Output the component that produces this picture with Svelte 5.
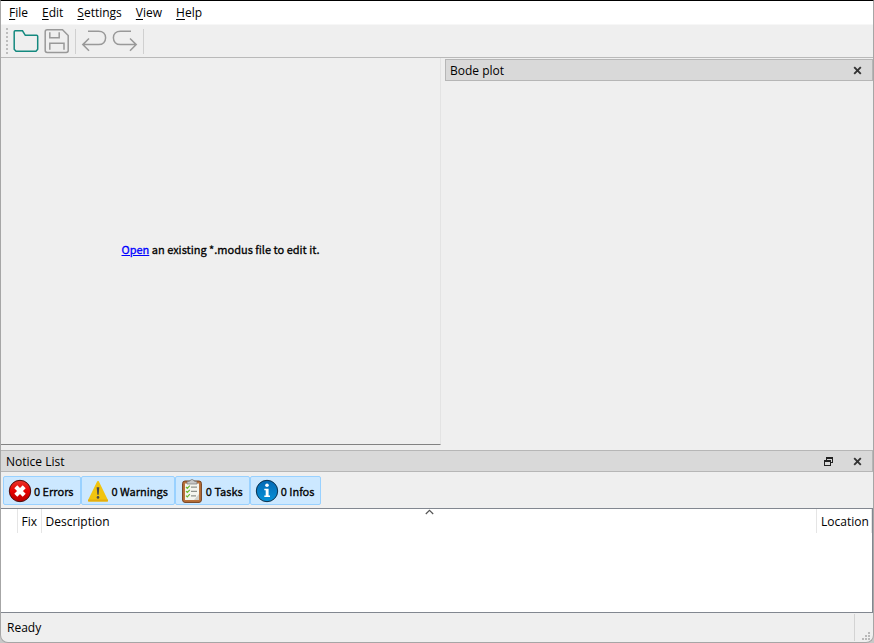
<script>
  const menus = ['File', 'Edit', 'Settings', 'View', 'Help'];
  const filters = [
    { kind: 'error', label: '0 Errors' },
    { kind: 'warning', label: '0 Warnings' },
    { kind: 'task', label: '0 Tasks' },
    { kind: 'info', label: '0 Infos' }
  ];
  let active = $state({ error: true, warning: true, task: true, info: true });
</script>

{#snippet closeIcon()}
  <svg width="9" height="9" viewBox="0 0 9 9"><path d="M1.2 1.2 7.8 7.8M7.8 1.2 1.2 7.8" stroke="#333" stroke-width="1.9" /></svg>
{/snippet}

<div class="window">
  <nav class="menubar">
    {#each menus as name}
      <button><u>{name[0]}</u>{name.slice(1)}</button>
    {/each}
  </nav>

  <div class="toolbar">
    <span class="grip"></span>
    <button aria-label="Open">
      <svg width="26" height="26" viewBox="0 0 26 26" fill="none" stroke="#14897f" stroke-width="1.5">
        <path d="M1.2 3.8Q1.2 2.8 2.2 2.8H9.5L12.3 7.3H23.6Q24.7 7.3 24.7 8.3V21.3L23 23.2H3L1.2 21.3Z" />
      </svg>
    </button>
    <button aria-label="Save">
      <svg width="26" height="26" viewBox="0 0 26 26" fill="none" stroke="#999" stroke-width="1.5">
        <path d="M3.2 1.8H18.5L24.2 7.5V22.5Q24.2 24.4 22.2 24.4H3.2Q1.2 24.4 1.2 22.5V3.8Q1.2 1.8 3.2 1.8ZM5.8 4.2V9.8H15.2V4.2M5.8 21.8V15.3H20V21.8" />
      </svg>
    </button>
    <span class="sep"></span>
    <button aria-label="Undo">
      <svg width="26" height="26" viewBox="0 0 26 26" fill="none" stroke="#999" stroke-width="1.5">
        <path d="M7 3.2H17.5C22 3.2 24.6 6 24.6 9.8S22 16.6 17.5 16.6H2M8 10.5 1.8 16.6 8 22.8" />
      </svg>
    </button>
    <button aria-label="Redo">
      <svg width="26" height="26" viewBox="0 0 26 26" fill="none" stroke="#999" stroke-width="1.5">
        <path d="M19 3.2H8.5C4 3.2 1.4 6 1.4 9.8S4 16.6 8.5 16.6H24M18 10.5 24.2 16.6 18 22.8" />
      </svg>
    </button>
    <span class="sep"></span>
  </div>

  <main>
    <section class="editor">
      <p><a href="#open">Open</a> an existing *.modus file to edit it.</p>
    </section>
    <section class="plot">
      <header class="dock">
        <h2>Bode plot</h2>
        <button aria-label="Close Bode plot">{@render closeIcon()}</button>
      </header>
    </section>
  </main>

  <section class="notices">
    <header class="dock">
      <h2>Notice List</h2>
      <button aria-label="Float Notice List">
        <svg width="9" height="9" viewBox="0 0 9 9" fill="none" stroke="#222" shape-rendering="crispEdges">
          <path d="M2.5 3V.5H8.5V5.5H7M2 1.5H9M.5 3.5H6.5V8.5H.5ZM0 4.5H7" />
        </svg>
      </button>
      <button aria-label="Close Notice List">{@render closeIcon()}</button>
    </header>

    <div class="filters">
      {#each filters as { kind, label }}
        <button class={kind} aria-pressed={active[kind]} onclick={() => (active[kind] = !active[kind])}>
          <svg width="24" height="24" viewBox="0 0 24 24">
            {#if kind === 'error'}
              <defs><linearGradient id="red" x2="0" y2="1"><stop stop-color="#e8352c" /><stop offset=".5" stop-color="#e60000" /><stop offset="1" stop-color="#b90000" /></linearGradient></defs>
              <circle cx="12" cy="12" r="10.7" fill="url(#red)" stroke="#4a0c0c" />
              <path d="M7.8 7.8 16.2 16.2M16.2 7.8 7.8 16.2" stroke="#fff" stroke-width="4.2" />
            {:else if kind === 'warning'}
              <path d="M12 3 21 21.5H3Z" fill="#f1c40f" stroke="#f1c40f" stroke-width="2" stroke-linejoin="round" />
              <path d="M2.3 20.5H21.7L22 22Q21.8 22.6 21 22.6H3Q2.2 22.6 2 22Z" fill="#e5ad0c" />
              <path d="M10.7 8.3H13.3L12.7 15.8H11.3Z" fill="#4b4a48" />
              <circle cx="12" cy="18.4" r="1.3" fill="#4b4a48" />
            {:else if kind === 'task'}
              <rect x="2.6" y="2" width="18.8" height="21.4" rx="2.4" fill="#b8703a" stroke="#71401e" />
              <rect x="5" y="4.5" width="14" height="16.5" fill="#f4f4ee" />
              <path d="M19 15V21H14Z" fill="#d1d0ca" />
              <path d="M7 5V3.4Q7 2.8 8 2.6L10 2Q10.3.5 12 .5T14 2L16 2.6Q17 2.8 17 3.4V5Z" fill="#c7c7c7" stroke="#777" stroke-width=".7" />
              <path d="M11 8.2H17M11 12.4H17M11 16.8H16" stroke="#8e918b" stroke-width="1.2" />
              <path d="M6 8 7.3 9.3 9.8 6.6M6 12.2 7.3 13.5 9.8 10.8M6 16.6 7.3 17.9 9.8 15.2" fill="none" stroke="#6ab82e" stroke-width="1.2" />
            {:else}
              <defs><linearGradient id="blue" x2="0" y2="1"><stop stop-color="#0468b4" /><stop offset="1" stop-color="#0792d8" /></linearGradient></defs>
              <circle cx="12" cy="12" r="10.7" fill="url(#blue)" stroke="#0b2f4b" />
              <circle cx="12" cy="6.3" r="1.8" fill="#fff" />
              <path d="M9.3 9.8H13.6V16.5H15V18H9.3V16.5H10.7V11.2H9.3Z" fill="#fff" />
            {/if}
          </svg>
          <span>{label}</span>
        </button>
      {/each}
    </div>

    <div class="list">
      <table>
        <thead>
          <tr>
            <th class="mark" aria-label="Type"></th>
            <th class="fix">Fix</th>
            <th>Description</th>
            <th class="location">Location</th>
          </tr>
        </thead>
      </table>
      <svg class="sort" width="9" height="6" viewBox="0 0 9 6"><path d="M.8 5 4.5 1.3 8.2 5" fill="none" stroke="#555" stroke-width="1.2" /></svg>
    </div>
  </section>

  <footer>
    <span>Ready</span>
    <svg width="20" height="27" viewBox="0 0 20 27">
      <path d="M1.5 0V27" stroke="#d3d3d3" />
      <path d="M15 18h2v2h-2zM12 21h2v2h-2zM15 21h2v2h-2zM9 24h2v2H9zM12 24h2v2h-2zM15 24h2v2h-2z" fill="#b9b9b9" />
    </svg>
  </footer>
</div>

<style>
  :global(body) {
    background: #c8c8c8;
  }
  .window {
    box-sizing: border-box;
    min-height: 100vh;
    display: flex;
    flex-direction: column;
    background: #efefef;
    border: 1px solid #a6a6a6;
    border-top-color: #000;
    border-radius: 0 0 8px 8px;
    color: #000;
    font: 12px/16px 'Open Sans', 'Noto Sans', sans-serif;
  }
  button {
    border: 0;
    padding: 0;
    background: none;
    color: inherit;
    font: inherit;
  }
  svg {
    display: block;
    flex: none;
  }
  .menubar {
    display: flex;
    height: 23px;
    padding-left: 1px;
    background: #fff;
    border-bottom: 1px solid #f7f7f7;
  }
  .menubar button {
    padding: 0 7px;
  }
  u {
    text-underline-offset: 2px;
  }
  .toolbar {
    display: flex;
    align-items: center;
    gap: 5px;
    height: 32px;
    padding-left: 5px;
    border-bottom: 1px solid #b9b9b9;
  }
  .grip {
    width: 2px;
    height: 26px;
    background: repeating-linear-gradient(#bdbdbd 0 2px, transparent 2px 4px);
  }
  .sep {
    width: 1px;
    height: 25px;
    background: #d0d0d0;
  }
  main {
    flex: 1;
    display: flex;
    padding-bottom: 5px;
  }
  .editor {
    box-sizing: border-box;
    flex: 0 0 calc(50% + 4px);
    display: flex;
    align-items: center;
    justify-content: center;
    border-right: 1px solid #e3e3e3;
    border-bottom: 1px solid #828282;
  }
  .editor p {
    margin: 0;
    padding-bottom: 4px;
    font: 11px/16px 'Noto Sans CJK SC', sans-serif;
    -webkit-text-stroke: 0.3px;
  }
  .editor a {
    color: #00f;
  }
  .plot {
    flex: 1;
    padding: 1px 0 0 4px;
  }
  .dock {
    box-sizing: border-box;
    display: flex;
    align-items: center;
    gap: 20px;
    height: 22px;
    padding: 0 10px 0 4px;
    background: #d9d9d9;
    border: 1px solid #b6b6b6;
  }
  .dock h2 {
    margin: 0 auto 0 0;
    padding-top: 2px;
    font: inherit;
  }
  .notices .dock {
    border-left: 0;
    padding-left: 5px;
  }
  .filters {
    display: flex;
    padding: 4px 2px 3px;
  }
  .filters button {
    box-sizing: border-box;
    display: flex;
    align-items: center;
    gap: 2px;
    height: 29px;
    padding: 0 6px 0 4px;
    background: #cce8ff;
    border: 1px solid #99d1ff;
    border-radius: 2px;
    font: 11px/16px 'Noto Sans CJK SC', sans-serif;
    -webkit-text-stroke: 0.3px;
  }
  .list {
    position: relative;
    height: 103px;
    background: #fff;
    border: 1px solid #828790;
    border-left: 0;
  }
  table {
    width: 100%;
    border-collapse: collapse;
    table-layout: fixed;
  }
  th {
    box-sizing: border-box;
    height: 24px;
    padding: 2px 4px 0;
    border-right: 1px solid #e5e5e5;
    font-weight: 400;
    text-align: left;
  }
  .mark {
    width: 16px;
  }
  .fix {
    width: 24px;
  }
  .location {
    width: 55px;
  }
  .sort {
    position: absolute;
    top: 0;
    left: calc(50% - 12px);
  }
  footer {
    display: flex;
    align-items: center;
    justify-content: space-between;
    height: 29px;
    padding-left: 6px;
  }
</style>
